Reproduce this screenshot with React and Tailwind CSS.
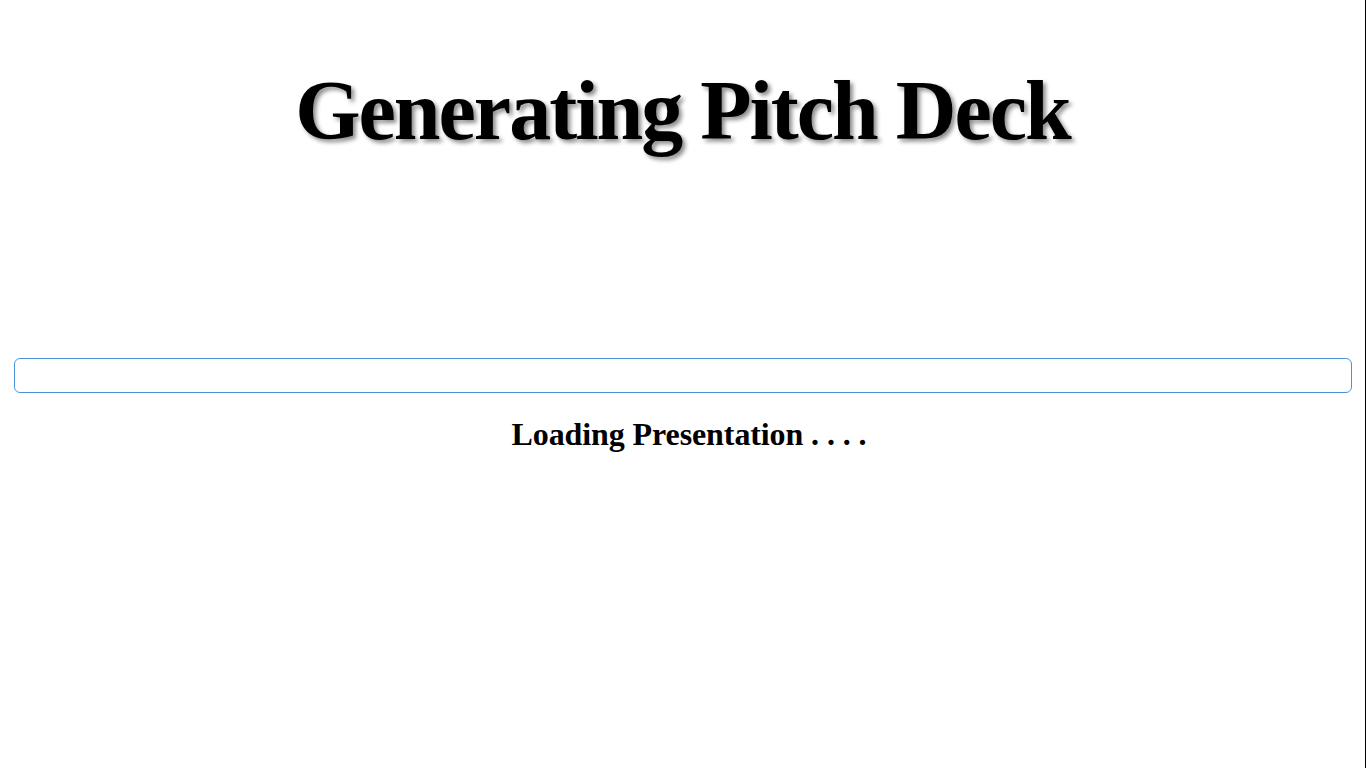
export default function App() {
  return (
    <div
      className="min-h-screen w-full bg-white border-r border-black"
      style={{ fontFamily: '"Liberation Serif", "DejaVu Serif", serif' }}
    >
      <header className="pt-[61px] text-center">
        <h1 className="text-[84px] leading-[100px] font-bold tracking-[-2px] text-black [text-shadow:3px_3px_4px_rgba(0,0,0,0.45)]">
          Generating Pitch Deck
        </h1>
      </header>

      <main className="pl-[14px] pr-[13px] pt-[197px]">
        <div className="h-[35px] w-full rounded-[6px] border border-[#4a93da] bg-white" />
        <p className="mt-[21px] pl-[12px] text-center text-[32px] font-bold leading-[40px] tracking-[-0.1px] text-black">
          Loading Presentation . . . .
        </p>
      </main>
    </div>
  )
}
